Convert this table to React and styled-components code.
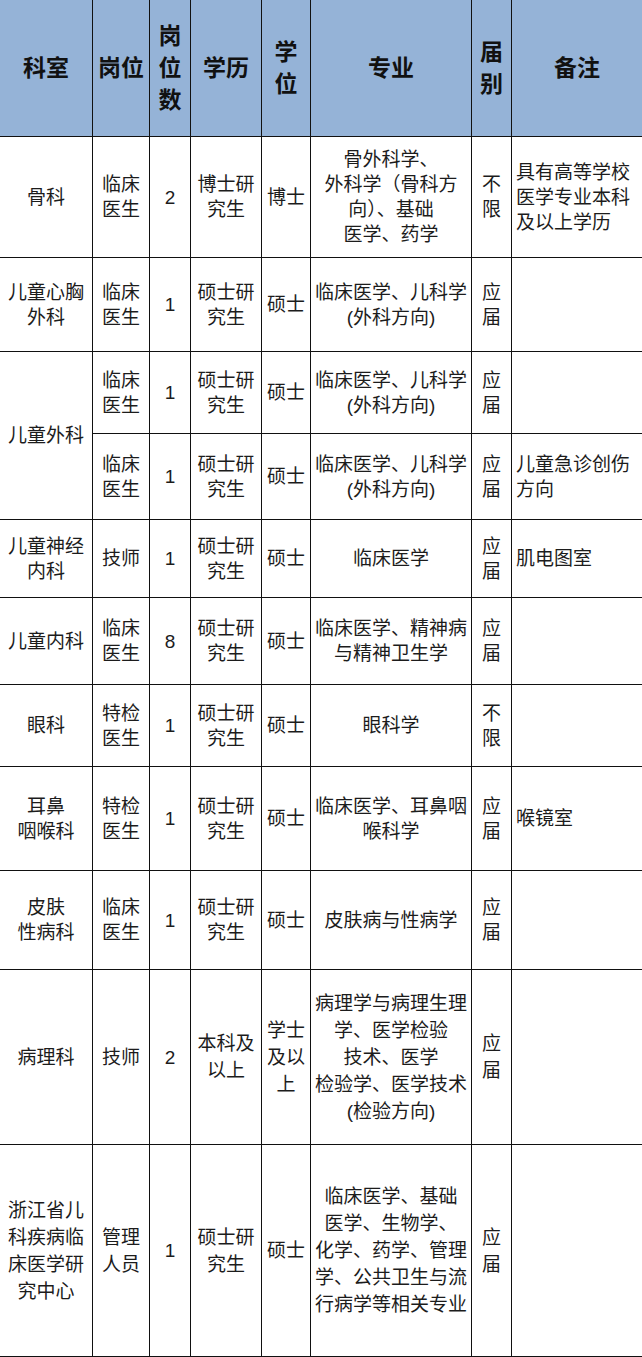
import React from "react";
import styled, { createGlobalStyle } from "styled-components";

const Global = createGlobalStyle`
  html, body { margin: 0; padding: 0; background: #fff; }
  body { overflow: hidden; font-family: "Liberation Sans", "Noto Sans CJK SC", sans-serif; }
`;

const Table = styled.table`
  border-collapse: collapse;
  table-layout: fixed;
  width: 643px;
  margin: -1px 0 0 -1px;
  color: #1c1c1c;
  font-family: "Liberation Sans", "Noto Sans CJK SC", sans-serif;
`;

const HeadCell = styled.th`
  background: #95b3d7;
  border: 1px solid #111;
  height: ${(p) => p.$h}px;
  padding: 0;
  font-size: 23px;
  font-weight: 700;
  line-height: 32px;
  color: #111;
  text-align: center;
  vertical-align: middle;
`;

const Cell = styled.td`
  border: 1px solid #111;
  height: ${(p) => p.$h}px;
  padding: 0;
  padding-left: ${(p) => (p.$left ? "4px" : "0")};
  font-size: 19px;
  line-height: ${(p) => p.$lh || 25}px;
  text-align: ${(p) => (p.$left ? "left" : "center")};
  vertical-align: middle;
  white-space: nowrap;
  overflow: hidden;
`;

const Line = styled.span`
  display: block;
`;

const widths = [93, 57, 41, 71, 49, 161, 40, 131];

const Lines = ({ t }) =>
  t.split("/").map((s, i) => <Line key={i}>{s}</Line>);

const headers = ["科室", "岗位", "岗/位/数", "学历", "学/位", "专业", "届/别", "备注"];

const rows = [
  { h: 120, c: ["骨科", "临床/医生", "2", "博士研/究生", "博士", "骨外科学、/外科学（骨科方/向）、基础/医学、药学", "不/限", "具有高等学校/医学专业本科/及以上学历"] },
  { h: 93, c: ["儿童心胸/外科", "临床/医生", "1", "硕士研/究生", "硕士", "临床医学、儿科学/(外科方向)", "应/届", ""] },
  { h: 81, span: "儿童外科", c: ["临床/医生", "1", "硕士研/究生", "硕士", "临床医学、儿科学/(外科方向)", "应/届", ""] },
  { h: 85, c: ["临床/医生", "1", "硕士研/究生", "硕士", "临床医学、儿科学/(外科方向)", "应/届", "儿童急诊创伤/方向"] },
  { h: 77, c: ["儿童神经/内科", "技师", "1", "硕士研/究生", "硕士", "临床医学", "应/届", "肌电图室"] },
  { h: 86, c: ["儿童内科", "临床/医生", "8", "硕士研/究生", "硕士", "临床医学、精神病/与精神卫生学", "应/届", ""] },
  { h: 81, c: ["眼科", "特检/医生", "1", "硕士研/究生", "硕士", "眼科学", "不/限", ""] },
  { h: 103, c: ["耳鼻/咽喉科", "特检/医生", "1", "硕士研/究生", "硕士", "临床医学、耳鼻咽/喉科学", "应/届", "喉镜室"] },
  { h: 98, c: ["皮肤/性病科", "临床/医生", "1", "硕士研/究生", "硕士", "皮肤病与性病学", "应/届", ""] },
  { h: 174, lh: 27, c: ["病理科", "技师", "2", "本科及/以上", "学士/及以/上", "病理学与病理生理/学、医学检验/技术、医学/检验学、医学技术/(检验方向)", "应/届", ""] },
  { h: 211, lh: 27, c: ["浙江省儿/科疾病临/床医学研/究中心", "管理/人员", "1", "硕士研/究生", "硕士", "临床医学、基础/医学、生物学、/化学、药学、管理/学、公共卫生与流/行病学等相关专业", "应/届", ""] },
];

export default function App() {
  return (
    <>
      <Global />
      <Table>
        <colgroup>
          {widths.map((w, i) => (
            <col key={i} style={{ width: w }} />
          ))}
        </colgroup>
        <thead>
          <tr>
            {headers.map((h, i) => (
              <HeadCell key={i} $h={136}>
                <Lines t={h} />
              </HeadCell>
            ))}
          </tr>
        </thead>
        <tbody>
          {rows.map((r, ri) => {
            const cells = r.c.map((t, ci) => {
              const isNote = ci === r.c.length - 1;
              return (
                <Cell key={ci} $h={r.h} $lh={r.lh} $left={isNote}>
                  <Lines t={t} />
                </Cell>
              );
            });
            return (
              <tr key={ri}>
                {r.span && (
                  <Cell rowSpan={2} $h={r.h}>
                    <Lines t={r.span} />
                  </Cell>
                )}
                {cells}
              </tr>
            );
          })}
        </tbody>
      </Table>
    </>
  );
}
